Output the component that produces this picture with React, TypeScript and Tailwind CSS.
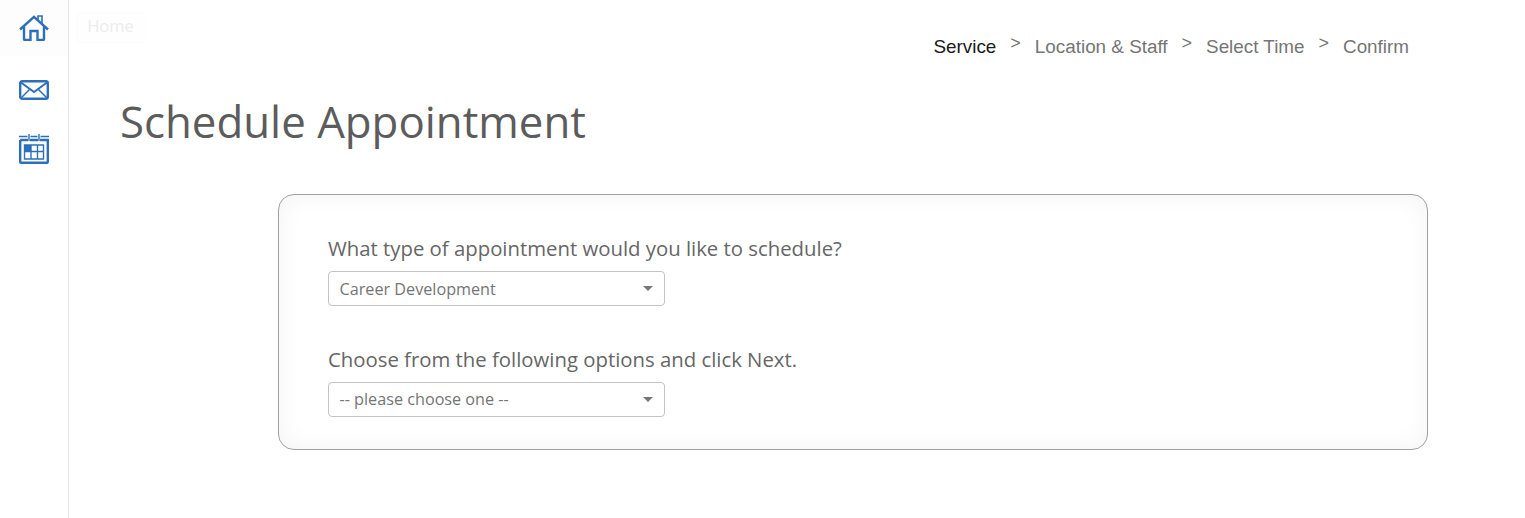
const HomeIcon = () => (
    <svg width="30" height="26" viewBox="0 0 30 26" fill="none" stroke="#2e6fba" strokeWidth="2.4">
        <path d="M1 14.5 L15 1.8 L29 14.5" />
        <path d="M5 11.5 V24 Q5 25 6 25 H11.5 V16 H18.5 V25 H24 Q25 25 25 24 V11.5" />
        <path d="M19 4.5 V1 H23 V9" strokeWidth="1.6" />
    </svg>
);

const MailIcon = () => (
    <svg width="30" height="20" viewBox="0 0 30 20" fill="none" stroke="#2e6fba" strokeWidth="2.4">
        <rect x="1.2" y="1.2" width="27.6" height="17.6" rx="2" />
        <path d="M2 2.5 L15 12 L28 2.5" strokeWidth="2" />
        <path d="M2 18 L10.5 9.5 M28 18 L19.5 9.5" strokeWidth="1.5" />
    </svg>
);

const CalendarIcon = () => (
    <svg width="30" height="30" viewBox="0 0 30 30" fill="none" stroke="#2e6fba">
        <path d="M0 2.5 H8.5 M11.5 2.5 H18.5 M21.5 2.5 H30" strokeWidth="1.6" />
        <path d="M10 0 V7 M20 0 V7" strokeWidth="1.4" />
        <path d="M1.2 6 V28 Q1.2 28.8 2 28.8 H28 Q28.8 28.8 28.8 28 V6 H21 M19 6 H11 M9 6 H1.2" strokeWidth="2.4" />
        <rect x="5.5" y="11" width="6.5" height="6.5" fill="#2e6fba" strokeWidth="0" />
        <path d="M5.5 11 H24.5 V25 H5.5 Z M12 11 V25 M18.5 11 V25 M5.5 17.5 H24.5" strokeWidth="1.4" />
    </svg>
);

const Select = ({ value, textClass }: { value: string; textClass?: string }) => (
    <div className="flex h-[35px] w-[337px] items-center justify-between rounded-[4px] border border-[#c4c4c4] bg-white pl-[10.5px] pr-[11px] text-[16.2px] text-[#757575]">
        <span className={textClass}>{value}</span>
        <span className="h-0 w-0 border-x-[5px] border-t-[5px] border-x-transparent border-t-[#777]" />
    </div>
);

const App = () => {
    return (
        <div className="flex h-[518px] w-[1525px] overflow-hidden bg-white font-['Open_Sans',sans-serif]">
            {/* Sidebar */}
            <aside className="flex w-[69px] shrink-0 flex-col items-center border-r border-[#e9e9e9]">
                <div className="flex h-[56px] w-full items-center justify-center bg-[#fdfdfd] pb-[1px]">
                    <HomeIcon />
                </div>
                <div className="mt-[24px]">
                    <MailIcon />
                </div>
                <div className="mt-[34px]">
                    <CalendarIcon />
                </div>
            </aside>

            <main className="relative flex-1">
                <div className="absolute left-[7px] top-[12px] flex h-[31px] w-[69px] items-center justify-center rounded-[4px] border border-[#fcfcfc] bg-[#fefefe] pb-[3px] text-[16.5px] text-[#ececec]">
                    Home
                </div>

                {/* Steps */}
                <nav className="flex justify-end pt-[34px] pr-[116px] font-['Liberation_Sans',sans-serif] text-[18.85px] leading-[25px] text-[#757575]">
                    <span className="text-[#1a1a1a]">Service</span>
                    <span className="ml-[14px] -translate-y-[3px] text-[18px]">&gt;</span>
                    <span className="ml-[14px]">Location &amp; Staff</span>
                    <span className="ml-[14px] -translate-y-[3px] text-[18px]">&gt;</span>
                    <span className="ml-[14px]">Select Time</span>
                    <span className="ml-[14px] -translate-y-[3px] text-[18px]">&gt;</span>
                    <span className="ml-[14px]">Confirm</span>
                </nav>

                <h1 className="ml-[51px] mt-[34px] text-[43.8px] leading-[57px] text-[#5c5c5c]">
                    Schedule Appointment
                </h1>

                {/* Form card */}
                <section className="ml-[209px] mt-[44px] h-[256px] w-[1150px] rounded-[16px] border border-[#a0a0a0] bg-white px-[49px] pt-[39px] shadow-[inset_0_0_24px_rgba(0,0,0,0.05)]">
                    <label className="block text-[20.33px] leading-[28px] text-[#666]">
                        What type of appointment would you like to schedule?
                    </label>
                    <div className="mt-[9px]">
                        <Select value="Career Development" textClass="pt-[2px]" />
                    </div>
                    <label className="mt-[39px] block text-[20.33px] leading-[28px] text-[#666]">
                        Choose from the following options and click Next.
                    </label>
                    <div className="mt-[9px]">
                        <Select value="-- please choose one --" />
                    </div>
                </section>
            </main>
        </div>
    );
};

export default App;
